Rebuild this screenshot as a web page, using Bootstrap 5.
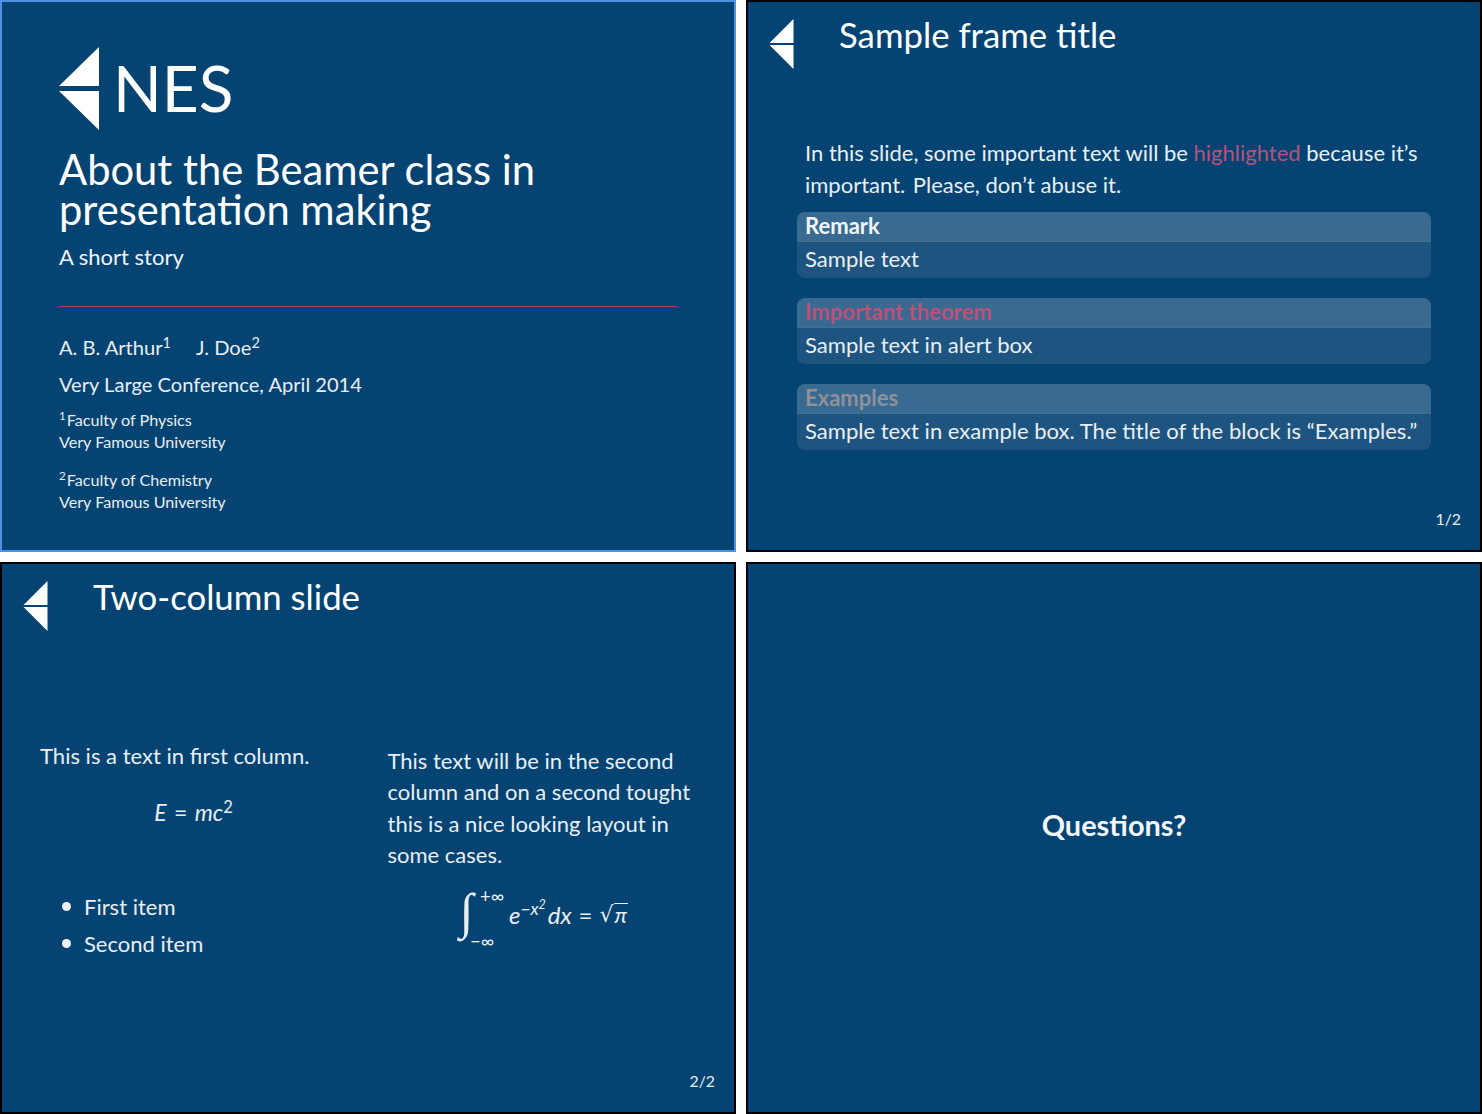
<!DOCTYPE html>
<html lang="en">
<head>
<meta charset="utf-8">
<title>Beamer slides</title>
<link rel="stylesheet" href="https://cdn.jsdelivr.net/npm/bootstrap@5.3.0/dist/css/bootstrap.min.css">
<style>
html,body{margin:0;background:#fff;}
body{font-family:"Lato","Liberation Sans",sans-serif;width:1482px;height:1114px;overflow:hidden;color:#e9eef3;font-variant-ligatures:common-ligatures;font-feature-settings:"liga" 1;}
.deck{display:grid;grid-template-columns:736px 736px;grid-template-rows:552px 552px;gap:10px;}
.slide-box{background:#054472;border:2px solid #000;display:flex;flex-direction:column;height:552px;width:736px;overflow:hidden;}
.slide-box.sel{border-color:#5191e3;}
.title-slide{padding:45px 57px 0;}
.logo-row{display:flex;align-items:center;gap:14px;height:83px;}
.logo-name{font-size:64px;line-height:83px;color:#fff;position:relative;top:-1px;}
.main-title{font-size:41.700px;line-height:40px;color:#fff;margin:19px 0 0;font-weight:400;}
.sub-title{font-size:22px;line-height:30px;margin-top:13px;color:#f1f4f7;}
.rule-line{height:1px;background:#a8425f;width:618px;margin:34px 0 0;}
.t20{font-size:20.130px;line-height:28px;}
.t16{font-size:16.150px;line-height:21.500px;}
.t16 sup{margin-right:1px;}
.gap-auth{margin-top:26px;}
.gap-conf{margin-top:9px;}
.gap-f1{margin-top:11px;}
.gap-f2{margin-top:17px;}
.ms-doe{margin-left:25px;}
sup{font-size:.72em;line-height:0;}
.frame-head{display:flex;align-items:flex-start;height:66px;padding:17px 0 0 21px;}
.frame-title{font-size:34.750px;line-height:32px;color:#fff;font-weight:400;margin:0 0 0 45px;}
.body-wrap{flex:1;display:flex;flex-direction:column;}
.para-a{font-size:22px;line-height:32px;padding:69px 0 0 57px;margin:0 0 11px;width:690px;}
.sent-gap{margin-left:2px;}
.hot{color:#b9517a;}
.blk{margin:0 0 20px 49px;width:634px;border-radius:8px;overflow:hidden;background:#1e5580;font-size:22.050px;}
.blk-h{background:#396a91;font-weight:700;height:30px;line-height:28.500px;padding-left:8px;color:#f2f5f8;border-bottom:1px solid #41708f;}
.blk-b{height:36px;line-height:34px;padding-left:8px;}
.blk-h.c-hot{color:#b9517a;}
.blk-h.c-gray{color:#8f929b;}
.pg{font-size:15.800px;line-height:20px;text-align:right;padding-right:19px;margin-top:auto;padding-bottom:21px;}
.cols{display:flex;flex:1;}
.col-l{width:347px;padding-left:38px;}
.col-r{flex:1;padding-left:38.500px;}
.p-l{font-size:22.050px;line-height:32px;margin:110px 0 0;}
.eq1{font-size:23px;text-align:center;width:307px;margin-top:24px;line-height:32px;word-spacing:1.500px;}
.math{font-style:italic;}
.bul{list-style:none;margin:60px 0 0;padding:0;font-size:22px;line-height:37px;}
.bul li{display:flex;align-items:center;}
.bul li::before{content:"";width:9px;height:9px;border-radius:50%;background:#eef2f5;margin:0 13px 0 22px;}
.p-r{font-size:22px;line-height:31.400px;margin:115px 0 0;width:320px;}
.eq2{display:flex;align-items:center;margin:9px 0 0 72px;font-size:24px;height:70px;}
.int-sym{font-family:"Liberation Serif",serif;font-size:50px;line-height:70px;font-style:italic;width:22px;margin-top:-8px;padding-left:0;}
.lims{display:flex;flex-direction:column;justify-content:space-between;height:63px;font-size:18.500px;line-height:18px;width:27.500px;margin-top:7px;}
.lims span:first-child{margin-left:-1.500px;}
.lims span:last-child{margin-left:-11.500px;}
.exp-sp{margin-left:2px;}
.eq-op{margin:0 7px;}
.rad{border-top:1.500px solid #e9eef3;line-height:22px;padding:0 1px;font-size:22px;}
.root-g{font-family:"DejaVu Sans",sans-serif;font-size:22px;}
.center-q{flex:1;display:flex;align-items:center;justify-content:center;font-size:28.900px;font-weight:700;color:#f4f6f8;padding-bottom:26px;}
</style>
</head>
<body>
<div class="deck">
  <section class="slide-box sel title-slide">
    <div class="logo-row">
      <svg width="40" height="83" viewBox="0 0 40 83" aria-hidden="true"><path d="M40 0V39H0Z M40 44V83L0 44Z" fill="#fff"/></svg>
      <span class="logo-name">NES</span>
    </div>
    <h1 class="main-title">About the Beamer class in<br>presentation making</h1>
    <div class="sub-title">A short story</div>
    <div class="rule-line"></div>
    <div class="t20 gap-auth">A. B. Arthur<sup>1</sup><span class="ms-doe">J. Doe<sup>2</sup></span></div>
    <div class="t20 gap-conf">Very Large Conference, April 2014</div>
    <div class="t16 gap-f1"><sup>1</sup>Faculty of Physics<br>Very Famous University</div>
    <div class="t16 gap-f2"><sup>2</sup>Faculty of Chemistry<br>Very Famous University</div>
  </section>

  <section class="slide-box">
    <div class="frame-head">
      <svg width="25" height="50" viewBox="0 0 25 50" aria-hidden="true"><path d="M24.500 0V24H.5Z M24.500 26V50L.5 26Z" fill="#fff"/></svg>
      <h2 class="frame-title">Sample frame title</h2>
    </div>
    <div class="body-wrap">
      <p class="para-a">In this slide, some important text will be <span class="hot">highlighted</span> because it’s important. <span class="sent-gap">Please,</span> don’t abuse it.</p>
      <div class="blk"><div class="blk-h">Remark</div><div class="blk-b">Sample text</div></div>
      <div class="blk"><div class="blk-h c-hot">Important theorem</div><div class="blk-b">Sample text in alert box</div></div>
      <div class="blk"><div class="blk-h c-gray">Examples</div><div class="blk-b">Sample text in example box. The title of the block is “Examples.”</div></div>
      <div class="pg">1/2</div>
    </div>
  </section>

  <section class="slide-box">
    <div class="frame-head">
      <svg width="25" height="50" viewBox="0 0 25 50" aria-hidden="true"><path d="M24.500 0V24H.5Z M24.500 26V50L.5 26Z" fill="#fff"/></svg>
      <h2 class="frame-title">Two-column slide</h2>
    </div>
    <div class="body-wrap">
      <div class="cols">
        <div class="col-l">
          <p class="p-l">This is a text in first column.</p>
          <div class="eq1"><span class="math">E</span> = <span class="math">mc</span><sup>2</sup></div>
          <ul class="bul"><li>First item</li><li>Second item</li></ul>
        </div>
        <div class="col-r">
          <p class="p-r">This text will be in the second column and on a second tought this is a nice looking layout in some cases.</p>
          <div class="eq2">
            <span class="int-sym">∫</span>
            <span class="lims"><span>+∞</span><span>−∞</span></span>
            <span class="math">e<sup>−x<sup>2</sup></sup></span><span class="math exp-sp">dx</span><span class="eq-op">=</span><span class="root-g">√</span><span class="rad math">π</span>
          </div>
        </div>
      </div>
      <div class="pg">2/2</div>
    </div>
  </section>

  <section class="slide-box">
    <div class="center-q">Questions?</div>
  </section>
</div>
<script src="https://cdn.jsdelivr.net/npm/bootstrap@5.3.0/dist/js/bootstrap.bundle.min.js"></script>
</body>
</html>
